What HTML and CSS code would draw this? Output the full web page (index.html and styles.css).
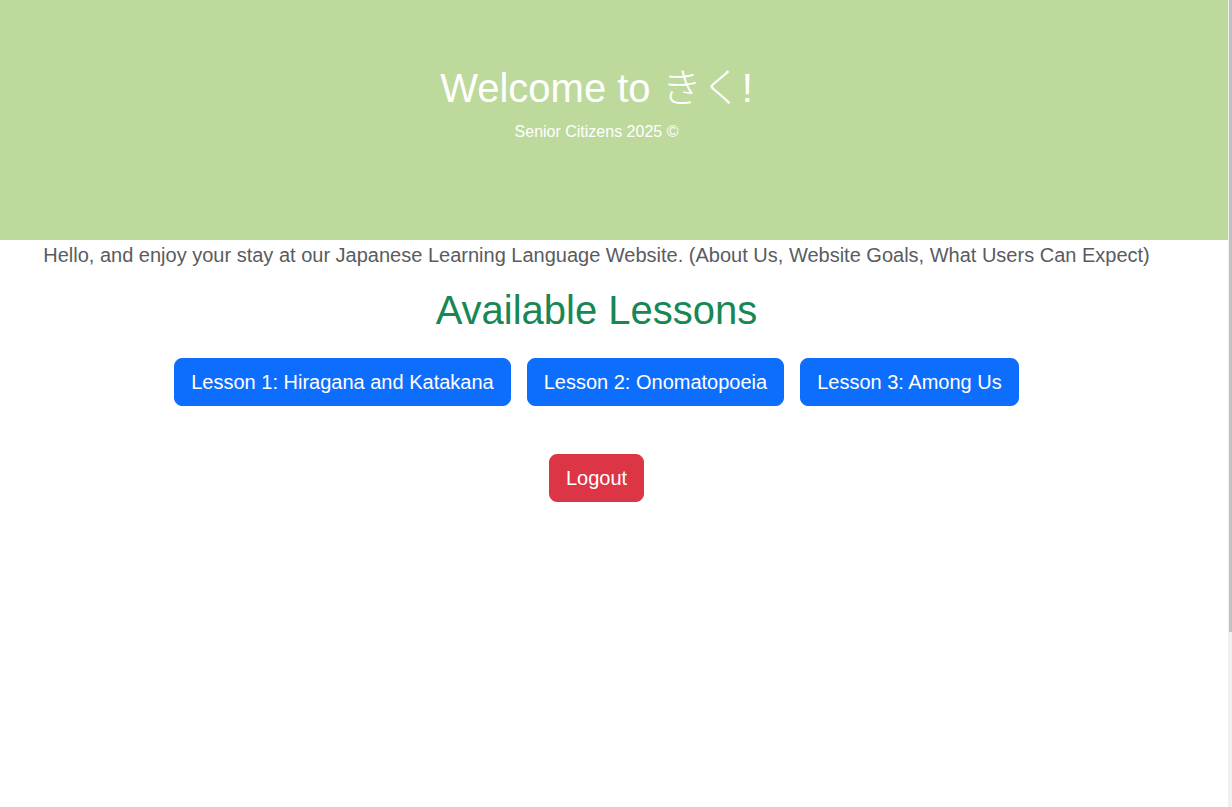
FILE: index.html
```html
<!DOCTYPE html>
<html lang="en">
<head>
<meta charset="utf-8">
<title>きく</title>
<link rel="stylesheet" href="styles.css">
</head>
<body>
<header class="hero">
  <h1 class="hero-title">Welcome to <span class="jp">きく</span>!</h1>
  <p class="hero-sub">Senior Citizens 2025 ©</p>
</header>
<main class="content">
  <p class="intro">Hello, and enjoy your stay at our Japanese Learning Language Website. (About Us, Website Goals, What Users Can Expect)</p>
  <h2 class="section-title">Available Lessons</h2>
  <div class="lessons">
    <a class="btn btn-primary" href="#">Lesson 1: Hiragana and Katakana</a>
    <a class="btn btn-primary" href="#">Lesson 2: Onomatopoeia</a>
    <a class="btn btn-primary" href="#">Lesson 3: Among Us</a>
  </div>
  <div class="logout-row">
    <a class="btn btn-danger" href="#">Logout</a>
  </div>
</main>
<div class="scrollbar"><div class="scrollbar-thumb"></div></div>
</body>
</html>
```

FILE: styles.css
```css
html, body {
  margin: 0;
  padding: 0;
  background: #ffffff;
}
body {
  font-family: "Liberation Sans", Arial, "Noto Sans CJK JP", sans-serif;
  color: #212529;
  padding-right: 4px;
  overflow: hidden;
}
.hero {
  background: #bed99c;
  box-sizing: border-box;
  height: 240px;
  padding: 61px 35px 0 0;
  text-align: center;
  color: #ffffff;
}
.hero-title {
  margin: 0 0 8px;
  font-size: 40px;
  line-height: 1.2;
  font-weight: 400;
}
.jp {
  font-family: "Noto Sans CJK JP", sans-serif;
  font-weight: 300;
}
.hero-sub {
  margin: 0;
  font-size: 16px;
  line-height: 1.5;
}
.content {
  padding-right: 35px;
  text-align: center;
}
.intro {
  margin: 0 0 16px;
  font-size: 20px;
  line-height: 1.5;
  color: #595c5f;
}
.section-title {
  margin: 0 0 8px;
  font-size: 40px;
  line-height: 1.2;
  font-weight: 400;
  color: #198754;
}
.lessons {
  display: flex;
  justify-content: center;
  gap: 16px;
  margin-top: 24px;
}
.logout-row {
  display: flex;
  justify-content: center;
  margin-top: 48px;
}
.btn {
  display: inline-block;
  padding: 8px 16px;
  font-size: 20px;
  line-height: 1.5;
  border: 1px solid transparent;
  border-radius: 8px;
  color: #ffffff;
  text-decoration: none;
}
.btn-primary {
  background: #0d6efd;
  border-color: #0d6efd;
}
.btn-danger {
  background: #dc3545;
  border-color: #dc3545;
}
.scrollbar {
  position: fixed;
  top: 0;
  right: 0;
  width: 4px;
  height: 100vh;
  background: #f0f0f0;
}
.scrollbar-thumb {
  margin-left: 1px;
  width: 3px;
  height: 632px;
  background: #c1c1c1;
}
```
